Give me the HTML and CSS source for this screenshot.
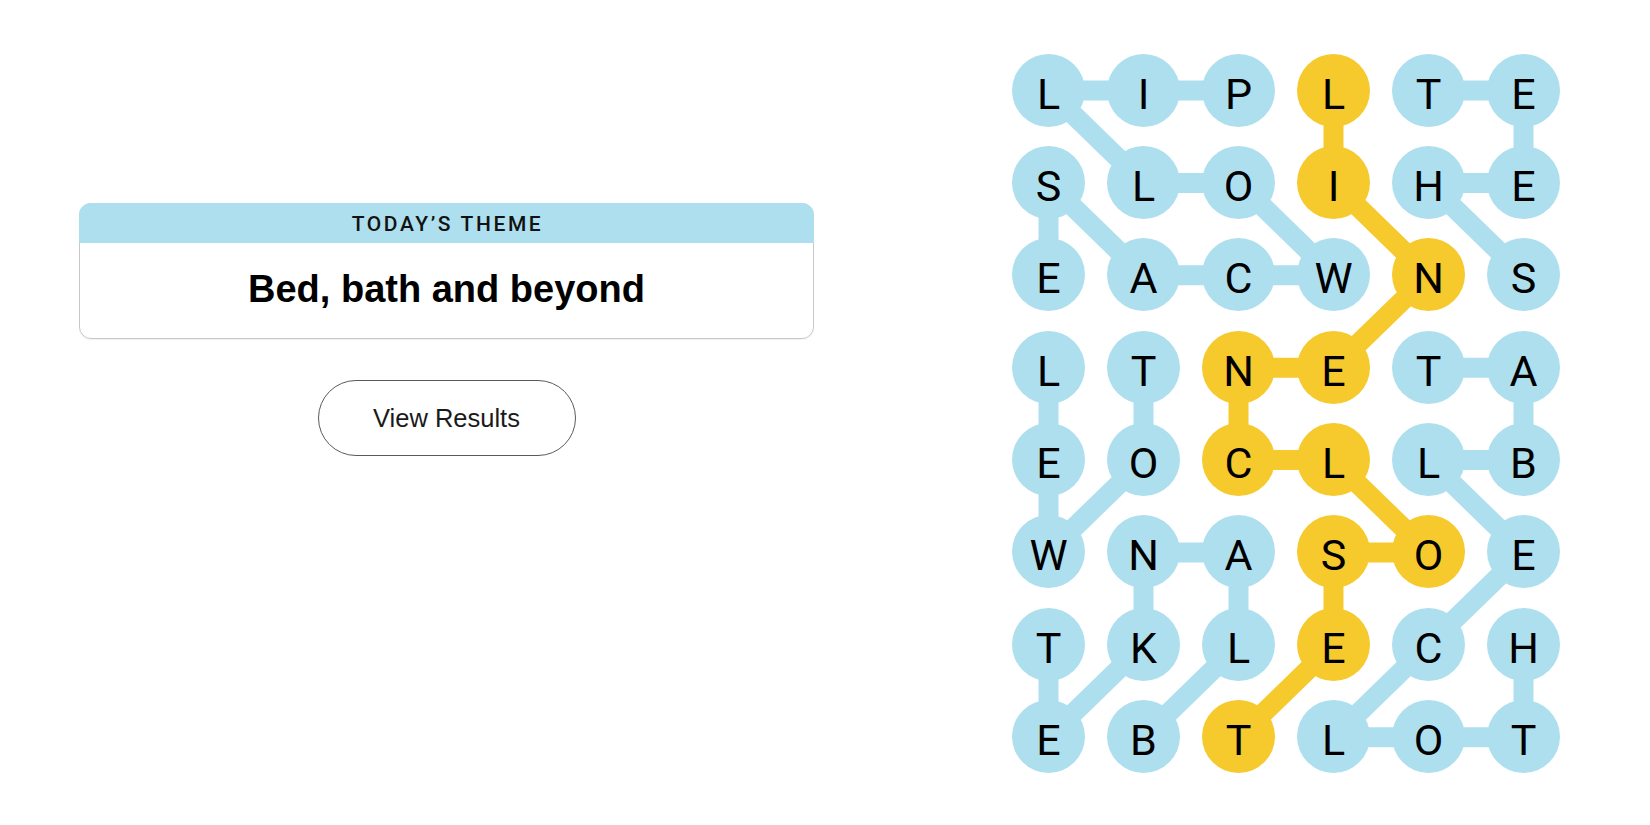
FILE: index.html
```html
<!DOCTYPE html>
<html lang="en">
<head>
<meta charset="utf-8">
<title>Strands</title>
<link rel="stylesheet" href="styles.css">
</head>
<body>
<main class="page">
  <section class="left">
    <div class="card">
      <div class="card-head">TODAY’S THEME</div>
      <div class="card-body">Bed, bath and beyond</div>
    </div>
    <button class="btn">View Results</button>
  </section>
  <section class="board">
    <svg class="paths" width="548" height="720" viewBox="0 0 548 720" aria-hidden="true">
      <g fill="none" stroke-width="20" stroke-linejoin="round">
        <polyline class="blue" points="226.5,36.5 131.5,36.5 36.5,36.5 131.5,128.9 226.5,128.9 321.5,221.3 226.5,221.3 131.5,221.3 36.5,128.9 36.5,221.3"/>
        <polyline class="blue" points="511.5,221.3 416.5,128.9 511.5,128.9 511.5,36.5 416.5,36.5"/>
        <polyline class="blue" points="131.5,313.7 131.5,406.1 36.5,498.5 36.5,406.1 36.5,313.7"/>
        <polyline class="blue" points="416.5,313.7 511.5,313.7 511.5,406.1 416.5,406.1 511.5,498.5 416.5,590.9 321.5,683.3 416.5,683.3 511.5,683.3 511.5,590.9"/>
        <polyline class="blue" points="131.5,683.3 226.5,590.9 226.5,498.5 131.5,498.5 131.5,590.9 36.5,683.3 36.5,590.9"/>
        <polyline class="gold" points="321.5,36.5 321.5,128.9 416.5,221.3 321.5,313.7 226.5,313.7 226.5,406.1 321.5,406.1 416.5,498.5 321.5,498.5 321.5,590.9 226.5,683.3"/>
      </g>
    </svg>
    <div class="grid">
      <div class="cell">L</div><div class="cell">I</div><div class="cell">P</div><div class="cell span">L</div><div class="cell">T</div><div class="cell">E</div>
      <div class="cell">S</div><div class="cell">L</div><div class="cell">O</div><div class="cell span">I</div><div class="cell">H</div><div class="cell">E</div>
      <div class="cell">E</div><div class="cell">A</div><div class="cell">C</div><div class="cell">W</div><div class="cell span">N</div><div class="cell">S</div>
      <div class="cell">L</div><div class="cell">T</div><div class="cell span">N</div><div class="cell span">E</div><div class="cell">T</div><div class="cell">A</div>
      <div class="cell">E</div><div class="cell">O</div><div class="cell span">C</div><div class="cell span">L</div><div class="cell">L</div><div class="cell">B</div>
      <div class="cell">W</div><div class="cell">N</div><div class="cell">A</div><div class="cell span">S</div><div class="cell span">O</div><div class="cell">E</div>
      <div class="cell">T</div><div class="cell">K</div><div class="cell">L</div><div class="cell span">E</div><div class="cell">C</div><div class="cell">H</div>
      <div class="cell">E</div><div class="cell">B</div><div class="cell span">T</div><div class="cell">L</div><div class="cell">O</div><div class="cell">T</div>
    </div>
  </section>
</main>
</body>
</html>
```

FILE: styles.css
```css
* { box-sizing: border-box; }

html, body {
  margin: 0;
  padding: 0;
  background: #ffffff;
}

body {
  width: 1650px;
  height: 825px;
  overflow: hidden;
  font-family: "Liberation Sans", Arial, sans-serif;
  color: #121212;
}

.page {
  display: flex;
  align-items: flex-start;
}

.left {
  width: 735px;
  margin-left: 79px;
  padding-top: 203px;
  display: flex;
  flex-direction: column;
  align-items: center;
}

.card {
  width: 100%;
  height: 136px;
  border: 1px solid #c8c8c8;
  border-radius: 12px;
  display: flex;
  flex-direction: column;
  box-shadow: 0 1px 1px rgba(0, 0, 0, 0.06);
}

.card-head {
  height: 40px;
  margin: -1px -1px 0;
  background: #aedfee;
  border-radius: 12px 12px 0 0;
  display: flex;
  align-items: center;
  justify-content: center;
  font-family: Roboto, "Liberation Sans", sans-serif;
  font-size: 21px;
  font-weight: 500;
  letter-spacing: 2.6px;
  color: #121212;
  padding-top: 1px;
  padding-left: 2px;
}

.card-body {
  flex: 1;
  display: flex;
  align-items: center;
  justify-content: center;
  font-size: 38px;
  font-weight: 700;
  color: #000;
  padding-bottom: 2px;
}

.btn {
  margin-top: 41px;
  width: 258px;
  height: 76px;
  border: 1px solid #5a5a5a;
  border-radius: 38px;
  background: #fff;
  font-family: "Liberation Sans", Arial, sans-serif;
  font-size: 25.5px;
  color: #1a1a1a;
  padding: 0;
}

.board {
  position: relative;
  width: 548px;
  height: 720px;
  margin-left: 198px;
  margin-top: 53.5px;
}

.paths {
  position: absolute;
  left: 0;
  top: 0;
}

.paths .blue { stroke: #aedfee; }
.paths .gold { stroke: #f6c92c; }

.grid {
  position: relative;
  display: grid;
  grid-template-columns: repeat(6, 73px);
  grid-template-rows: repeat(8, 73px);
  column-gap: 22px;
  row-gap: 19.4px;
}

.cell {
  width: 73px;
  height: 73px;
  border-radius: 50%;
  background: #aedfee;
  display: flex;
  align-items: center;
  justify-content: center;
  font-family: Roboto, "Liberation Sans", sans-serif;
  font-size: 43px;
  font-weight: 400;
  color: #000;
  padding-top: 7px;
}

.cell.span { background: #f6c92c; }
```
